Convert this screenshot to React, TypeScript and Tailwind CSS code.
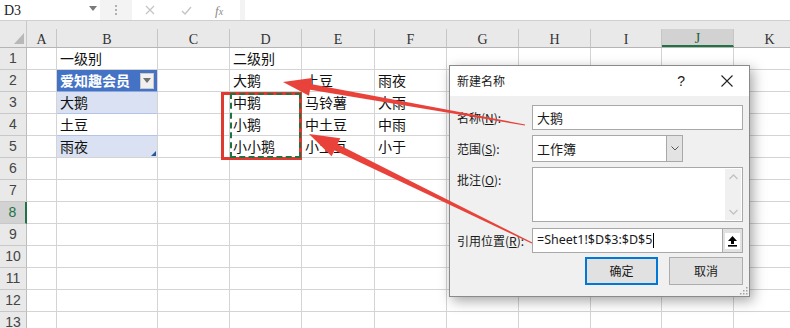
import React from 'react';

const COLS = [
  { k: 'A', w: 'w-[30px]' },
  { k: 'B', w: 'w-[101px]' },
  { k: 'C', w: 'w-[72px]' },
  { k: 'D', w: 'w-[72px]' },
  { k: 'E', w: 'w-[73px]' },
  { k: 'F', w: 'w-[72px]' },
  { k: 'G', w: 'w-[72px]' },
  { k: 'H', w: 'w-[72px]' },
  { k: 'I', w: 'w-[71px]' },
  { k: 'J', w: 'w-[72px]' },
  { k: 'K', w: 'w-[72px]' },
];

const DATA: Record<number, Record<string, string>> = {
  1: { B: '一级别', D: '二级别' },
  2: { B: '爱知趣会员', D: '大鹅', E: '土豆', F: '雨夜' },
  3: { B: '大鹅', D: '中鹅', E: '马铃薯', F: '大雨' },
  4: { B: '土豆', D: '小鹅', E: '中土豆', F: '中雨' },
  5: { B: '雨夜', D: '小小鹅', E: '小土豆', F: '小于' },
};

const ROWS = Array.from({ length: 13 }, (_, i) => i + 1);

function arrow(tx: number, ty: number, ex: number, ey: number, hl: number, hw: number, s0: number, s1: number) {
  const dx = ex - tx;
  const dy = ey - ty;
  const len = Math.sqrt(dx * dx + dy * dy);
  const ux = dx / len;
  const uy = dy / len;
  const nx = -uy;
  const ny = ux;
  const bx = tx + ux * hl;
  const by = ty + uy * hl;
  const head = [
    [tx, ty],
    [bx + nx * hw, by + ny * hw],
    [bx - nx * hw, by - ny * hw],
  ];
  const bx2 = tx + ux * (hl - 3);
  const by2 = ty + uy * (hl - 3);
  const shaft = [
    [bx2 + nx * s0, by2 + ny * s0],
    [ex + nx * s1, ey + ny * s1],
    [ex - nx * s1, ey - ny * s1],
    [bx2 - nx * s0, by2 - ny * s0],
  ];
  const f = (p: number[][]) => p.map((q) => q.map((v) => v.toFixed(1)).join(',')).join(' ');
  return { head: f(head), shaft: f(shaft) };
}

function cellClass(row: number, col: string) {
  let c = 'shrink-0 h-full border-r border-b px-[3px] flex items-center whitespace-nowrap overflow-hidden text-[14px] text-[#111] ';
  if (col === 'B' && row >= 2 && row <= 5) {
    if (row === 2) c += 'bg-[#4472c4] text-white font-bold border-b-[#8ea9db] border-r-[#d4d4d4] ';
    else if (row === 4) c += 'bg-white border-b-[#b4c6e7] border-r-[#d4d4d4] ';
    else if (row === 3) c += 'bg-[#d9e1f2] border-b-[#b4c6e7] border-r-[#d4d4d4] ';
    else c += 'bg-[#d9e1f2] border-b-[#d4d4d4] border-r-[#d4d4d4] relative ';
  } else {
    c += 'border-[#d4d4d4] ';
  }
  return c;
}

export default function App() {
  const a1 = arrow(283, 82, 525, 125, 28, 9, 3, 0.6);
  const a2 = arrow(309, 134, 532, 243, 30, 10, 3.5, 0.6);

  return (
    <div className="relative w-[790px] h-[328px] overflow-hidden bg-white font-['Noto_Sans_CJK_SC','Noto_Sans',sans-serif]">
      {/* formula bar */}
      <div className="flex h-[21px] bg-[#f3f3f3] border-b border-[#cfcfcf]">
        <div className="relative w-[100px] h-[20px] bg-white flex items-center pl-[4px] font-['Liberation_Serif',serif] text-[14px] text-[#222]">
          D3
          <svg className="absolute left-[89px] top-[6px]" width="8" height="5" viewBox="0 0 8 5">
            <polygon points="0,0 8,0 4,5" fill="#7a7a7a" />
          </svg>
        </div>
        <div className="w-[32px] flex flex-col items-center justify-center gap-[2px]">
          <span className="w-[2px] h-[2px] bg-[#b0b0b0]" />
          <span className="w-[2px] h-[2px] bg-[#b0b0b0]" />
          <span className="w-[2px] h-[2px] bg-[#b0b0b0]" />
        </div>
        <div className="w-[108px] h-[20px] bg-white flex items-center">
          <svg className="ml-[13px]" width="10" height="10" viewBox="0 0 10 10">
            <path d="M1 1 L9 9 M9 1 L1 9" stroke="#c4c4c4" strokeWidth="1.2" />
          </svg>
          <svg className="ml-[26px]" width="11" height="9" viewBox="0 0 11 9">
            <path d="M1 5 L4 8 L10 1" stroke="#c4c4c4" strokeWidth="1.4" fill="none" />
          </svg>
          <span className="ml-[23px] italic font-['Liberation_Serif',serif] text-[13px] text-[#8a8a8a] leading-none">
            f<span className="text-[10px]">x</span>
          </span>
        </div>
        <div className="w-[5px]" />
        <div className="flex-1 h-[20px] bg-white" />
      </div>

      {/* column header */}
      <div className="flex h-[27px] bg-[#e9e9e9] border-b border-[#b5b5b5]">
        <div className="relative w-[27px] shrink-0 h-full border-r border-[#c8c8c8]">
          <svg className="absolute left-[14px] top-[12px]" width="10" height="11" viewBox="0 0 10 11">
            <polygon points="10,0 10,11 0,11" fill="#b8b8b8" />
          </svg>
        </div>
        {COLS.map((c) => (
          <div
            key={c.k}
            className={
              c.w +
              ' shrink-0 self-end h-[18px] pt-[2px] border-r border-[#c6c6c6] flex items-center justify-center font-["Liberation_Serif",serif] text-[14px] ' +
              (c.k === 'J' ? 'bg-[#d2d2d2] border-b-2 border-b-[#217346] text-[#1d5c38]' : 'text-[#333]')
            }
          >
            {c.k}
          </div>
        ))}
      </div>

      {/* rows */}
      {ROWS.map((r) => (
        <div key={r} className="flex h-[22px]">
          <div
            className={
              'w-[27px] shrink-0 h-full border-b border-[#c8c8c8] flex items-center justify-center font-["Liberation_Sans",sans-serif] text-[14px] ' +
              (r === 8
                ? 'bg-[#d2d2d2] text-[#217346] border-r-2 border-r-[#217346]'
                : 'bg-[#e9e9e9] text-[#444] border-r border-r-[#bdbdbd]')
            }
          >
            {r}
          </div>
          {COLS.map((c) => (
            <div key={c.k} className={c.w + ' ' + cellClass(r, c.k)}>
              {DATA[r]?.[c.k] ?? ''}
              {c.k === 'B' && r === 2 && (
                <div className="ml-auto w-[14px] h-[16px] bg-[#f0f0f0] border border-[#c9c9c9] flex items-center justify-center">
                  <svg width="8" height="5" viewBox="0 0 8 5">
                    <polygon points="0,0 8,0 4,5" fill="#707070" />
                  </svg>
                </div>
              )}
              {c.k === 'B' && r === 5 && (
                <svg className="absolute right-[1px] bottom-[1px]" width="5" height="5" viewBox="0 0 5 5">
                  <polygon points="5,0 5,5 0,5" fill="#2f5597" />
                </svg>
              )}
            </div>
          ))}
        </div>
      ))}

      {/* highlight rectangle around D3:D5 */}
      <div className="absolute left-[221px] top-[92px] w-[81px] h-[68px] border-[3px] border-[#e03a30]" />
      <div className="absolute left-[230px] top-[93px] w-[71px] h-[65px] border-2 border-dashed border-[#217346]" />

      {/* dialog */}
      <div className="absolute left-[449px] top-[65px] w-[301px] h-[232px] border border-[#8a8a8a] bg-[#f0f0f0] shadow-[3px_4px_12px_rgba(0,0,0,0.35)] flex flex-col text-[12px] text-[#1a1a1a]">
        <div className="h-[30px] bg-white flex items-center pl-[7px] pr-[16px]">
          <span className="text-[12px]">新建名称</span>
          <span className="ml-auto font-['Liberation_Sans',sans-serif] text-[14px]">?</span>
          <svg className="ml-[36px]" width="12" height="12" viewBox="0 0 12 12">
            <path d="M0.5 0.5 L11.5 11.5 M11.5 0.5 L0.5 11.5" stroke="#222" strokeWidth="1.1" />
          </svg>
        </div>
        <div className="relative flex-1 pl-[7px] pr-[6px] pt-[9px] flex flex-col">
          <div className="flex items-center h-[25px]">
            <span className="w-[75px] shrink-0">
              名称(<span className="underline">N</span>):
            </span>
            <div className="flex-1 h-full bg-white border border-[#a8a8a8] flex items-center pl-[4px] text-[13px]">大鹅</div>
          </div>
          <div className="flex items-center h-[27px] mt-[5px]">
            <span className="w-[75px] shrink-0">
              范围(<span className="underline">S</span>):
            </span>
            <div className="w-[151px] h-full bg-white border border-[#a8a8a8] flex items-center">
              <span className="pl-[4px] text-[13px] flex-1">工作簿</span>
              <div className="w-[16px] h-full bg-[#e3e3e3] border-l border-[#a8a8a8] flex items-center justify-center">
                <svg width="8" height="5" viewBox="0 0 8 5">
                  <path d="M0.5 0.5 L4 4 L7.5 0.5" stroke="#555" fill="none" strokeWidth="1" />
                </svg>
              </div>
            </div>
          </div>
          <div className="flex h-[55px] mt-[5px]">
            <span className="w-[75px] shrink-0 pt-[4px]">
              批注(<span className="underline">O</span>):
            </span>
            <div className="flex-1 h-full bg-white border border-[#a8a8a8] flex justify-end p-[1px]">
              <div className="w-[16px] h-full bg-[#f0f0f0] flex flex-col items-center justify-between py-[5px]">
                <svg width="9" height="6" viewBox="0 0 9 6">
                  <path d="M0.5 5 L4.5 1 L8.5 5" stroke="#c2c2c2" fill="none" strokeWidth="1.3" />
                </svg>
                <svg width="9" height="6" viewBox="0 0 9 6">
                  <path d="M0.5 1 L4.5 5 L8.5 1" stroke="#c2c2c2" fill="none" strokeWidth="1.3" />
                </svg>
              </div>
            </div>
          </div>
          <div className="flex items-center h-[25px] mt-[6px]">
            <span className="w-[75px] shrink-0">
              引用位置(<span className="underline">R</span>):
            </span>
            <div className="flex-1 h-full bg-white border border-[#a8a8a8] flex items-center">
              <span className="pl-[4px] flex-1 font-['Noto_Sans',sans-serif] text-[12.5px] flex items-center">
                =Sheet1!$D$3:$D$5<span className="inline-block w-[1px] h-[15px] bg-black ml-[1px]" />
              </span>
              <div className="w-[20px] h-full bg-[#e1e1e1] border-l border-[#a8a8a8] flex items-center justify-center">
                <div className="w-[15px] h-[16px] bg-white flex items-center justify-center">
                  <svg width="11" height="12" viewBox="0 0 11 12">
                    <polygon points="5.5,1 10,6 7,6 7,9 4,9 4,6 1,6" fill="#000" />
                    <rect x="1" y="10" width="9" height="1.6" fill="#000" />
                  </svg>
                </div>
              </div>
            </div>
          </div>
          <div className="flex justify-end h-[28px] mt-[4px] gap-[11px]">
            <div className="w-[73px] h-full bg-[#e1e1e1] border-2 border-[#0078d7] flex items-center justify-center">确定</div>
            <div className="w-[74px] h-full bg-[#e1e1e1] border border-[#adadad] flex items-center justify-center">取消</div>
          </div>
          <svg className="absolute right-[1px] bottom-[1px]" width="10" height="10" viewBox="0 0 10 10">
            <g fill="#a0a0a0">
              <rect x="8" y="2" width="1.5" height="1.5" />
              <rect x="5" y="5" width="1.5" height="1.5" />
              <rect x="8" y="5" width="1.5" height="1.5" />
              <rect x="2" y="8" width="1.5" height="1.5" />
              <rect x="5" y="8" width="1.5" height="1.5" />
              <rect x="8" y="8" width="1.5" height="1.5" />
            </g>
          </svg>
        </div>
      </div>

      {/* red arrows */}
      <svg className="absolute inset-0 pointer-events-none" width="790" height="328" viewBox="0 0 790 328">
        <polygon points={a1.shaft} fill="#e8423a" />
        <polygon points={a1.head} fill="#e8423a" />
        <polygon points={a2.shaft} fill="#e8423a" />
        <polygon points={a2.head} fill="#e8423a" />
      </svg>
    </div>
  );
}
